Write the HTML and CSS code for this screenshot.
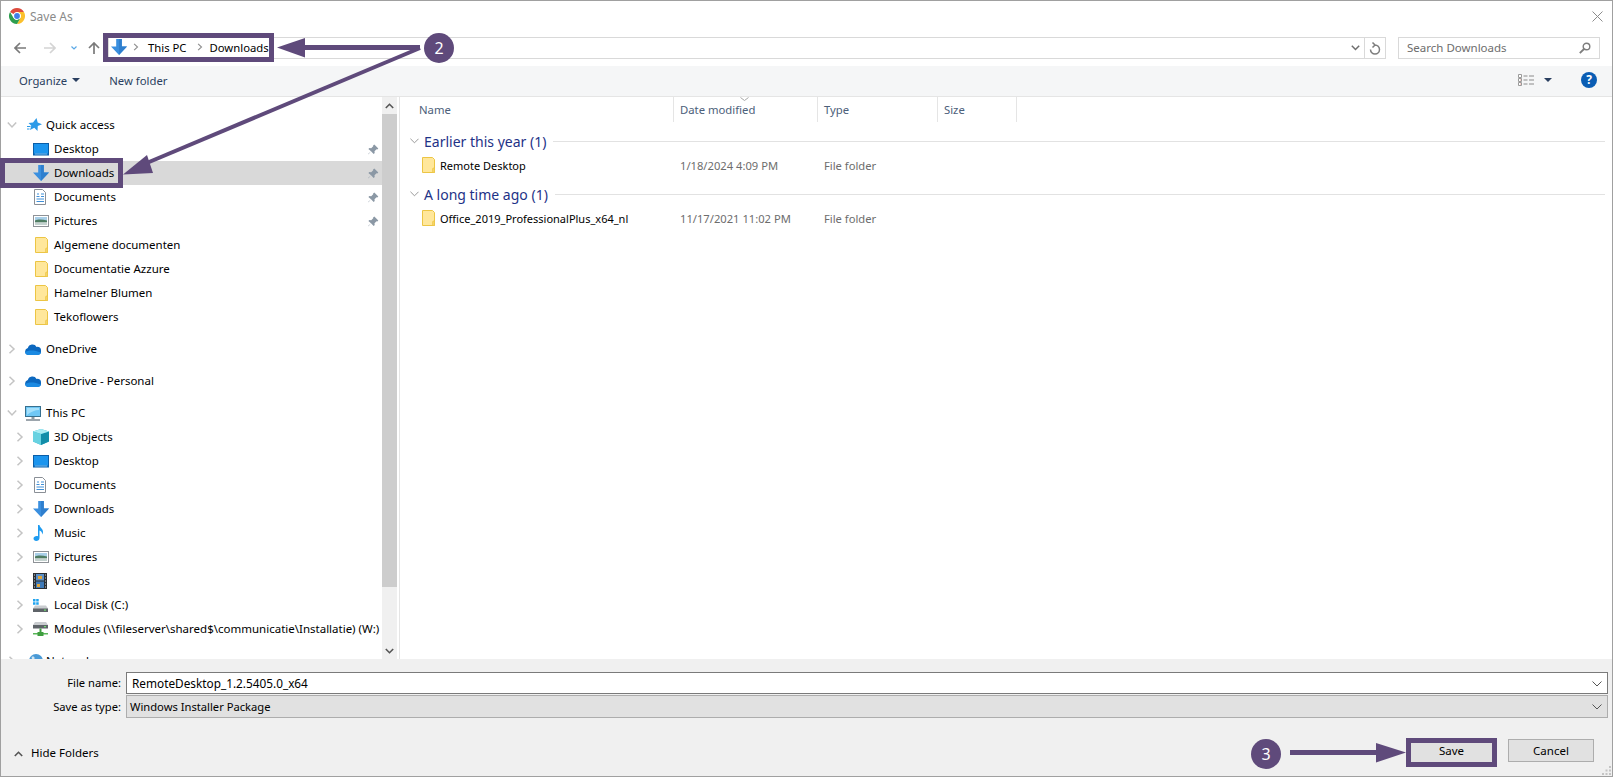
FILE: index.html
```html
<!DOCTYPE html>
<html lang="en">
<head>
<meta charset="utf-8">
<title>Save As</title>
<link rel="stylesheet" href="styles.css">
</head>
<body>
<svg class="defs" width="0" height="0" aria-hidden="true">
  <symbol id="i-folder" viewBox="0 0 13 16"><path d="M.5.5h10l2 2v13H.5z" fill="#ffe79b" stroke="#ecc544"/><path d="M11 11h1.5v4.5H10.500V12z" fill="#f6d565" stroke="#ecc544" stroke-width=".6"/></symbol>
  <symbol id="i-down" viewBox="0 0 16 16"><path d="M5.2 0h5.6v7.6H16L8 16 0 7.6h5.200z" fill="#3a8fdf"/><path d="M8 0h2.800v7.600H16L8 16z" fill="#2f7fce"/></symbol>
  <symbol id="i-desktop" viewBox="0 0 16 13"><rect x=".5" y=".5" width="15" height="11.500" fill="#1c95ee" stroke="#0a5ea8"/><path d="M1 10.500h14v1.500H1z" fill="#0c6fc2"/><path d="M2 11h12" stroke="#bfe3fb" stroke-width=".6"/></symbol>
  <symbol id="i-docs" viewBox="0 0 14 16"><path d="M1.500.5h8l3 3v12h-11z" fill="#fff" stroke="#8a8f96"/><path d="M4 5h2M3.500 7.500h3M8 5h3M8 7.500h3M3.500 10h7.500M3.500 12.500h7.500" stroke="#3f8fd8" stroke-width="1"/></symbol>
  <symbol id="i-pics" viewBox="0 0 16 12"><rect x=".5" y=".5" width="15" height="11" fill="#fff" stroke="#8e9297"/><rect x="2" y="2" width="12" height="4" fill="#a9cfe8"/><path d="M2 5.500c3-1.500 8-1 12 0v2H2z" fill="#4f7d62"/><rect x="2" y="7.500" width="12" height="2.500" fill="#c4d2cf"/></symbol>
  <symbol id="i-star" viewBox="0 0 15 14"><path d="M9.500 0l1.200 4.600L15 6.200l-4.200 1.700L10.500 13 7.300 9.700 3 12l1.300-4.300L1.500 5l4.500-.5z" fill="#2d9be8"/><path d="M0 8.500h3.500M0 11h2.500" stroke="#2d9be8"/></symbol>
  <symbol id="i-cloud" viewBox="0 0 16 11"><path d="M3.500 11A3.500 3.500 0 0 1 2.800 4.100 4.800 4.800 0 0 1 11.600 2.900 3.900 3.900 0 0 1 12.600 11z" fill="#0c68bf"/><path d="M3.500 11c-2 0-3.500-1.200-3.500-2.800 3-2.200 9-2.500 16 .4-.3 1.300-1.700 2.400-3.400 2.400z" fill="#1b8ae2"/></symbol>
  <symbol id="i-pc" viewBox="0 0 16 15"><rect x=".5" y=".5" width="15" height="10" fill="#6fc7f5" stroke="#37708f"/><path d="M2 2h12v2C10 4 5 6 2 9z" fill="#a5e0fb"/><path d="M6.500 11h3v2h-3z" fill="#8b99a3"/><path d="M1 14h14" stroke="#7b8790" stroke-width="1.500"/></symbol>
  <symbol id="i-cube" viewBox="0 0 16 16"><path d="M8 0l8 2.500v10L8 16l-8-3.500v-10z" fill="#2fb6cf"/><path d="M8 5l8-2.500v10L8 16z" fill="#128ea9"/><path d="M8 0l8 2.500L8 5 0 2.500z" fill="#a9ecf3"/><path d="M0 2.500L8 5v11l-8-3.500z" fill="#68d2e1"/></symbol>
  <symbol id="i-music" viewBox="0 0 12 16"><path d="M5 0h1.500c.3 2.500 3.500 3.500 3.500 7 0 1-.3 1.800-.8 2.600.2-2.600-1.400-3.800-2.700-4.200V13c0 1.800-1.500 3-3.300 3C1.700 16 .5 15 .5 13.600c0-1.500 1.500-2.600 3.200-2.600.5 0 .9.100 1.300.2z" fill="#1e9bf0"/></symbol>
  <symbol id="i-video" viewBox="0 0 14 16"><rect width="14" height="16" fill="#2b2f33"/><path d="M3 1h8v6.500H3z" fill="#5a90c9"/><path d="M3 8.500h8V15H3z" fill="#3f7ab8"/><path d="M5 3h4v3H5zM4 11h3v3H4z" fill="#e0a53a"/><path d="M1 2h1M1 5h1M1 8h1M1 11h1M1 14h1M12 2h1M12 5h1M12 8h1M12 11h1M12 14h1" stroke="#cfd3d6"/></symbol>
  <symbol id="i-disk" viewBox="0 0 15 13"><path d="M0 0h2.500v2.500H0zM3.200 0h2.500v2.500H3.200zM0 3.200h2.500v2.500H0zM3.200 3.200h2.500v2.500H3.200z" fill="#1fa3ee"/><path d="M2 6.500h11l2 3v3.500H0V9.500z" fill="#c9cccf"/><rect y="9.500" width="15" height="3.500" fill="#5e6368"/><rect x="11" y="10.500" width="2" height="1.200" fill="#6ee06e"/></symbol>
  <symbol id="i-net" viewBox="0 0 15 15"><path d="M2 0h11l2 3v3H0V3z" fill="#c9cccf"/><rect y="3" width="15" height="3.500" fill="#5e6368"/><rect x="11" y="4" width="2" height="1.200" fill="#6ee06e"/><path d="M6.500 6.500h2V11h-2z" fill="#3f9e3f"/><path d="M0 11h15v1.500H0z" fill="#58b558"/><path d="M4.500 10h6v4h-6z" fill="#3f9e3f"/></symbol>
  <symbol id="i-globe" viewBox="0 0 16 16"><circle cx="8" cy="8" r="8" fill="#4a9ad6"/><path d="M3 3c3-1 4 1 3 3S3 7 3 3zM9 8c3-1 5 0 4 3s-3 3-4 1z" fill="#cfe5f2"/></symbol>
  <symbol id="i-pin" viewBox="0 0 11 11"><path d="M6.300.6l4 4-1 .8-.8-.2-2 2 .2 1.800-1 1L3 7.300l-2.500 3-.4-.4 2.900-2.600L.4 5.100l1-1 1.800.2 2-2-.1-.9z" fill="#8b98a5"/></symbol>
  <symbol id="c-right" viewBox="0 0 8 10"><path d="M1.500.8L6 5 1.500 9.200" fill="none" stroke="currentColor" stroke-width="1.500"/></symbol>
  <symbol id="c-down" viewBox="0 0 10 8"><path d="M.8 1.500L5 6l4.200-4.500" fill="none" stroke="currentColor" stroke-width="1.500"/></symbol>
</svg>

<div class="win">
  <header class="titlebar">
    <svg class="chrome" viewBox="0 0 16 16" aria-hidden="true">
      <path d="M8 0a8 8 0 0 1 6.930 4H8a4 4 0 0 0-3.460 2L1.070 4A8 8 0 0 1 8 0z" fill="#dd4b3e"/>
      <path d="M14.930 4A8 8 0 0 1 8 16l3.460-6A4 4 0 0 0 8 4z" fill="#fbc02d"/>
      <path d="M1.070 4l3.470 6A4 4 0 0 0 8 12l3.460-2L8 16A8 8 0 0 1 1.070 4z" fill="#2e9e4f"/>
      <circle cx="8" cy="8" r="3.600" fill="#fff"/><circle cx="8" cy="8" r="2.900" fill="#3f7fe8"/>
    </svg>
    <span class="title">Save As</span>
    <svg class="close" viewBox="0 0 11 11" aria-hidden="true"><path d="M.5.500l10 10M10.500.500l-10 10" stroke="#8c8c8c"/></svg>
  </header>

  <nav class="navbar">
    <svg class="nav-a back" viewBox="0 0 12 12" aria-hidden="true"><path d="M12 6H1.500M6 1L1 6l5 5" fill="none" stroke="#7a7a7a" stroke-width="1.700"/></svg>
    <svg class="nav-a fwd" viewBox="0 0 12 12" aria-hidden="true"><path d="M0 6h10.500M6 1l5 5-5 5" fill="none" stroke="#d4d4d4" stroke-width="1.700"/></svg>
    <svg class="nav-c" viewBox="0 0 6 4" aria-hidden="true"><path d="M.5.500L3 3 5.500.500" fill="none" stroke="#5aa8e6" stroke-width="1.200"/></svg>
    <svg class="nav-a up" viewBox="0 0 12 12" aria-hidden="true"><path d="M6 12V1.500M1 6l5-5 5 5" fill="none" stroke="#7a7a7a" stroke-width="1.700"/></svg>
    <div class="address">
      <svg class="crumb-icon"><use href="#i-down"/></svg>
      <svg class="crumb-sep first"><use href="#c-right"/></svg>
      <span class="crumb">This PC</span>
      <svg class="crumb-sep"><use href="#c-right"/></svg>
      <span class="crumb">Downloads</span>
      <svg class="addr-drop" viewBox="0 0 9 6" aria-hidden="true"><path d="M.8.800L4.500 4.500 8.200.800" fill="none" stroke="#6d6d6d" stroke-width="1.500"/></svg>
      <div class="refresh">
        <svg viewBox="0 0 12 13" aria-hidden="true"><path d="M6 3a4.500 4.500 0 1 1-4.500 4.500M3.500.5L6 3 3.500 5.500" fill="none" stroke="#7d7d7d" stroke-width="1.500"/></svg>
      </div>
    </div>
    <div class="search">
      <span class="search-text">Search Downloads</span>
      <svg viewBox="0 0 12 12" aria-hidden="true"><circle cx="7.500" cy="4.500" r="3.300" fill="none" stroke="#7d7d7d" stroke-width="1.400"/><path d="M5 7L.8 11.200" stroke="#7d7d7d" stroke-width="1.800"/></svg>
    </div>
  </nav>

  <div class="toolbar">
    <span class="tool">Organize</span><span class="caret"></span>
    <span class="tool new">New folder</span>
    <span class="spacer"></span>
    <svg class="views" viewBox="0 0 17 12" aria-hidden="true"><path d="M.5.500h3v3h-3zM.5 4.500h3v3h-3zM.5 8.500h3v3h-3z" fill="#fff" stroke="#9a9a9a"/><path d="M2 6h.500M2 10h.500" stroke="#d04a3a"/><path d="M5.500 2h4M11 2h5M5.500 6h4M11 6h5M5.500 10h4M11 10h5" stroke="#8a8a8a"/></svg>
    <span class="caret views-caret"></span>
    <span class="help">?</span>
  </div>

  <main class="main">
    <aside class="tree">
      <div class="tree-list">
        <div class="row top"><svg class="exp"><use href="#c-down"/></svg><svg class="ic star-ic" style="--w:15px;--h:14px"><use href="#i-star"/></svg><span>Quick access</span></div>
        <div class="row sub"><svg class="ic" style="--w:16px;--h:13px"><use href="#i-desktop"/></svg><span>Desktop</span><svg class="pin"><use href="#i-pin"/></svg></div>
        <div class="row sub sel"><svg class="ic" style="--w:16px;--h:16px"><use href="#i-down"/></svg><span>Downloads</span><svg class="pin"><use href="#i-pin"/></svg></div>
        <div class="row sub"><svg class="ic" style="--w:14px;--h:16px"><use href="#i-docs"/></svg><span>Documents</span><svg class="pin"><use href="#i-pin"/></svg></div>
        <div class="row sub"><svg class="ic" style="--w:16px;--h:12px"><use href="#i-pics"/></svg><span>Pictures</span><svg class="pin"><use href="#i-pin"/></svg></div>
        <div class="row sub"><svg class="ic fold-ic" style="--w:13px;--h:16px"><use href="#i-folder"/></svg><span>Algemene documenten</span></div>
        <div class="row sub"><svg class="ic fold-ic" style="--w:13px;--h:16px"><use href="#i-folder"/></svg><span>Documentatie Azzure</span></div>
        <div class="row sub"><svg class="ic fold-ic" style="--w:13px;--h:16px"><use href="#i-folder"/></svg><span>Hamelner Blumen</span></div>
        <div class="row sub"><svg class="ic fold-ic" style="--w:13px;--h:16px"><use href="#i-folder"/></svg><span>Tekoflowers</span></div>

        <div class="row top gap"><svg class="exp"><use href="#c-right"/></svg><svg class="ic" style="--w:16px;--h:11px"><use href="#i-cloud"/></svg><span>OneDrive</span></div>
        <div class="row top gap"><svg class="exp"><use href="#c-right"/></svg><svg class="ic" style="--w:16px;--h:11px"><use href="#i-cloud"/></svg><span>OneDrive - Personal</span></div>

        <div class="row top gap"><svg class="exp"><use href="#c-down"/></svg><svg class="ic" style="--w:16px;--h:15px"><use href="#i-pc"/></svg><span>This PC</span></div>
        <div class="row child"><svg class="exp"><use href="#c-right"/></svg><svg class="ic" style="--w:16px;--h:16px"><use href="#i-cube"/></svg><span>3D Objects</span></div>
        <div class="row child"><svg class="exp"><use href="#c-right"/></svg><svg class="ic" style="--w:16px;--h:13px"><use href="#i-desktop"/></svg><span>Desktop</span></div>
        <div class="row child"><svg class="exp"><use href="#c-right"/></svg><svg class="ic" style="--w:14px;--h:16px"><use href="#i-docs"/></svg><span>Documents</span></div>
        <div class="row child"><svg class="exp"><use href="#c-right"/></svg><svg class="ic" style="--w:16px;--h:16px"><use href="#i-down"/></svg><span>Downloads</span></div>
        <div class="row child"><svg class="exp"><use href="#c-right"/></svg><svg class="ic" style="--w:12px;--h:16px"><use href="#i-music"/></svg><span>Music</span></div>
        <div class="row child"><svg class="exp"><use href="#c-right"/></svg><svg class="ic" style="--w:16px;--h:12px"><use href="#i-pics"/></svg><span>Pictures</span></div>
        <div class="row child"><svg class="exp"><use href="#c-right"/></svg><svg class="ic" style="--w:14px;--h:16px"><use href="#i-video"/></svg><span>Videos</span></div>
        <div class="row child"><svg class="exp"><use href="#c-right"/></svg><svg class="ic" style="--w:15px;--h:13px"><use href="#i-disk"/></svg><span>Local Disk (C:)</span></div>
        <div class="row child"><svg class="exp"><use href="#c-right"/></svg><svg class="ic" style="--w:15px;--h:15px"><use href="#i-net"/></svg><span>Modules (\\fileserver\shared$\communicatie\Installatie) (W:)</span></div>

        <div class="row top gap"><svg class="exp"><use href="#c-right"/></svg><svg class="ic net-ic" style="--w:14px;--h:14px"><use href="#i-globe"/></svg><span>Network</span></div>
      </div>
    </aside>

    <div class="scrollbar">
      <div class="sb-btn"><svg viewBox="0 0 9 6" aria-hidden="true"><path d="M.8 5L4.500 1.300 8.200 5" fill="none" stroke="#555" stroke-width="1.600"/></svg></div>
      <div class="sb-thumb"></div>
      <div class="sb-track"></div>
      <div class="sb-btn"><svg viewBox="0 0 9 6" aria-hidden="true"><path d="M.8 1L4.500 4.700 8.200 1" fill="none" stroke="#555" stroke-width="1.600"/></svg></div>
    </div>

    <section class="files">
      <div class="cols">
        <div class="col first">Name</div>
        <div class="col sorted">Date modified<svg class="sort" viewBox="0 0 9 4" aria-hidden="true"><path d="M.5.500L4.500 3.500 8.500.500" fill="none" stroke="#a6a6a6"/></svg></div>
        <div class="col">Type</div>
        <div class="col">Size</div>
      </div>
      <div class="group-h"><svg class="gchev" viewBox="0 0 10 6" aria-hidden="true"><path d="M.5.500L5 5 9.500.500" fill="none" stroke="#8d8d8d"/></svg><span>Earlier this year (1)</span><i class="rule"></i></div>
      <div class="file"><span class="fname"><svg class="fic"><use href="#i-folder"/></svg>Remote Desktop</span><span class="meta">1/18/2024 4:09 PM</span><span class="meta">File folder</span></div>
      <div class="group-h"><svg class="gchev" viewBox="0 0 10 6" aria-hidden="true"><path d="M.5.500L5 5 9.500.500" fill="none" stroke="#8d8d8d"/></svg><span>A long time ago (1)</span><i class="rule"></i></div>
      <div class="file"><span class="fname"><svg class="fic"><use href="#i-folder"/></svg>Office_2019_ProfessionalPlus_x64_nl</span><span class="meta">11/17/2021 11:02 PM</span><span class="meta">File folder</span></div>
    </section>
  </main>

  <footer class="footer">
    <div class="form-row">
      <label class="lab">File name:</label>
      <div class="field input">RemoteDesktop_1.2.5405.0_x64<svg class="fchev" viewBox="0 0 10 6" aria-hidden="true"><path d="M.5.500L5 5 9.500.500" fill="none" stroke="#555"/></svg></div>
    </div>
    <div class="form-row">
      <label class="lab">Save as type:</label>
      <div class="field select">Windows Installer Package<svg class="fchev" viewBox="0 0 10 6" aria-hidden="true"><path d="M.5.500L5 5 9.500.500" fill="none" stroke="#555"/></svg></div>
    </div>
    <div class="actions">
      <svg class="hide-ic" viewBox="0 0 9 6" aria-hidden="true"><path d="M.8 5L4.500 1.300 8.200 5" fill="none" stroke="#555" stroke-width="1.600"/></svg>
      <span class="hide">Hide Folders</span>
      <span class="spacer"></span>
      <button class="btn save">Save</button>
      <button class="btn cancel">Cancel</button>
    </div>
    <svg class="grip" viewBox="0 0 10 10" aria-hidden="true"><path d="M8 1h2v2H8zM4.500 4.500h2v2h-2zM8 4.500h2v2H8zM1 8h2v2H1zM4.500 8h2v2h-2zM8 8h2v2H8z" fill="#c4c4c4"/></svg>
  </footer>
</div>

<svg class="marks" viewBox="0 0 1613 777" aria-hidden="true">
  <rect class="mbox" x="105.500" y="35.500" width="166" height="24"/>
  <rect class="mbox" x="2.500" y="160.500" width="118" height="25"/>
  <rect class="mbox" x="1408.500" y="740.500" width="86" height="24"/>
  <path class="mline" d="M300 47.500H420"/>
  <path class="mfill" d="M277 47.500L305 38V57.500z"/>
  <path class="mline2" d="M420 48L142 165"/>
  <path class="mfill" d="M123 174.500L147 155L153 173z"/>
  <path class="mline3" d="M1290 752.500H1380"/>
  <path class="mfill" d="M1406 752.500L1376 743V762.500z"/>
</svg>
<div class="badge b2">2</div>
<div class="badge b3">3</div>
</body>
</html>
```

FILE: styles.css
```css
* { box-sizing: border-box; }
html, body { margin: 0; padding: 0; width: 1613px; height: 777px; overflow: hidden; background: #fff; }
body { position: relative; font-family: "Noto Sans", "Open Sans", sans-serif; font-size: 11.5px; color: #000; }
.defs { position: absolute; }
.win { width: 1613px; height: 777px; border: 1px solid #a0a0a0; display: flex; flex-direction: column; background: #fff; }

.titlebar { height: 32px; flex: none; display: flex; align-items: center; padding: 0 9px 2px 8px; }
.chrome { width: 16px; height: 16px; margin-right: 5px; }
.title { color: #8a8a8a; font-size: 12px; }
.close { width: 11px; height: 11px; margin-left: auto; }

.navbar { height: 33px; flex: none; display: flex; align-items: flex-start; padding: 4px 12px 0 13px; }
.nav-a { width: 12px; height: 12px; margin-top: 5px; flex: none; }
.fwd { margin-left: 18px; }
.nav-c { width: 6px; height: 4px; margin: 9px 0 0 15px; flex: none; }
.up { margin-left: 11px; }
.address { margin-left: 8px; flex: 1; height: 22px; border: 1px solid #d9d9d9; display: flex; align-items: center; padding: 0 0 2px 2px; color: #000; font-size: 11.3px; }
.crumb-icon { width: 16px; height: 16px; flex: none; }
.crumb-sep { width: 6px; height: 8px; margin: 0 7px 0 5px; flex: none; color: #8f8f8f; }
.crumb-sep.first { margin: 0 9px 0 6px; }
.crumb { flex: none; margin-right: 5px; }
.addr-drop { width: 9px; height: 6px; margin: 2px 4px 0 auto; flex: none; }
.refresh { width: 21px; height: 20px; margin-bottom: -2px; border-left: 1px solid #d9d9d9; display: flex; align-items: center; justify-content: center; flex: none; }
.refresh svg { width: 12px; height: 13px; }
.search { width: 202px; height: 22px; margin-left: 12px; flex: none; border: 1px solid #d9d9d9; display: flex; align-items: center; justify-content: space-between; padding: 0 8px 2px; color: #6d6d6d; }
.search svg { width: 12px; height: 12px; margin-top: 2px; }

.toolbar { height: 31px; flex: none; background: #f5f6f7; border-bottom: 1px solid #e5e5e5; display: flex; align-items: center; padding: 0 15px 2px 18px; color: #2a3f60; font-size: 11.3px; }
.caret { width: 0; height: 0; border-left: 4px solid transparent; border-right: 4px solid transparent; border-top: 4px solid #2a3f60; margin-left: 5px; }
.new { margin-left: 29px; }
.spacer { flex: 1; }
.views { width: 17px; height: 12px; }
.views-caret { margin-left: 9px; }
.help { width: 16px; height: 16px; border-radius: 50%; background: #0a5db4; color: #fff; font-weight: 700; font-size: 12px; line-height: 16px; text-align: center; margin-left: 29px; }

.main { flex: 1; min-height: 0; display: flex; }
.tree { width: 381px; flex: none; overflow: hidden; padding-top: 16px; }
.row { height: 24px; display: flex; align-items: center; white-space: nowrap; position: relative; color: #000; }
.row > span { padding-bottom: 2px; }
.row.gap { margin-top: 8px; }
.row.sel { background: #d9d9d9; }
.row .ic { width: var(--w); height: var(--h); flex: none; }
.exp { width: 10px; height: 10px; flex: none; color: #c4c4c4; }
.top { padding-left: 6px; }
.top .exp { margin-right: 8px; }
.top > span { position: absolute; left: 45px; }
.sub > span, .child > span { position: absolute; left: 53px; }
.sub { padding-left: 32px; }
.child { padding-left: 14px; }
.child .exp { margin-right: 8px; }
.pin { width: 11px; height: 11px; position: absolute; right: 3px; top: 7px; }
.star-ic { margin-left: 2px; }
.fold-ic { margin-left: 2px; }
.net-ic { margin-left: 4px; }

.scrollbar { width: 15px; flex: none; display: flex; flex-direction: column; background: #f0f0f0; }
.sb-btn { height: 17px; flex: none; display: flex; align-items: center; justify-content: center; }
.sb-btn svg { width: 9px; height: 6px; }
.sb-thumb { height: 473px; flex: none; background: #cdcdcd; }
.sb-track { flex: 1; }

.files { flex: 1; margin-left: 2px; border-left: 1px solid #e5e5e5; min-width: 0; }
.cols { display: flex; height: 25px; color: #4c607a; font-size: 11.3px; }
.col { width: 120px; padding-left: 6px; border-right: 1px solid #e5e5e5; line-height: 26px; position: relative; }
.col.first { width: 274px; padding-left: 19px; }
.col.sorted { width: 144px; }
.col:last-child { width: 79px; }
.sort { width: 9px; height: 4px; position: absolute; left: 66px; top: 0; }
.group-h { height: 24px; margin-top: 7px; display: flex; align-items: center; color: #1e3287; font-size: 14px; padding: 0 7px 0 10px; }
.file + .group-h { margin-top: 4px; }
.gchev { width: 9px; height: 6px; margin-right: 5px; flex: none; }
.rule { flex: 1; height: 1px; background: #e2e2e2; margin-left: 7px; }
.file { height: 25px; display: grid; grid-template-columns: 274px 144px 120px; align-items: center; padding-bottom: 1px; }
.fname { display: flex; align-items: center; padding-left: 22px; color: #000; white-space: nowrap; font-size: 11px; }
.fic { width: 13px; height: 16px; margin-right: 5px; flex: none; }
.meta { padding-left: 6px; color: #6d6d6d; font-size: 11.2px; }

.footer { height: 117px; flex: none; background: #f0f0f0; position: relative; padding-top: 12px; display: flex; flex-direction: column; }
.form-row { display: flex; align-items: center; height: 23px; margin-bottom: 1px; }
.lab { width: 120px; text-align: right; flex: none; font-size: 11.2px; }
.field { flex: none; width: 1482px; margin-left: 5px; display: flex; align-items: center; position: relative; }
.input { height: 22px; background: #fff; border: 1px solid #7a7a7a; padding-left: 5px; font-size: 11.8px; }
.select { height: 23px; background: #e1e1e1; border: 1px solid #adadad; padding-left: 3px; font-size: 11.2px; }
.fchev { width: 10px; height: 6px; position: absolute; right: 5px; top: 8px; }
.actions { display: flex; align-items: flex-start; margin-top: auto; padding: 0 18px 0 13px; height: 37px; }
.hide-ic { width: 9px; height: 6px; margin: 12px 8px 0 0; flex: none; }
.hide { margin-top: 6px; }
.btn { font: inherit; color: #000; height: 23px; width: 86px; background: #e1e1e1; border: 1px solid #adadad; padding: 0; }
.save { width: 81px; border: 0; }
.cancel { margin-left: 16px; }
.grip { width: 10px; height: 10px; position: absolute; right: 1px; bottom: 1px; }

.marks { position: absolute; left: 0; top: 0; width: 1613px; height: 777px; pointer-events: none; }
.mbox { fill: none; stroke: #5f4a7b; stroke-width: 5; }
.mline { fill: none; stroke: #5f4a7b; stroke-width: 5; }
.mline2 { fill: none; stroke: #5f4a7b; stroke-width: 4; }
.mline3 { fill: none; stroke: #5f4a7b; stroke-width: 5; }
.mfill { fill: #5f4a7b; }
.badge { position: absolute; width: 30px; height: 30px; border-radius: 50%; background: #5f4a7b; color: #fff; font-size: 16px; line-height: 30px; text-align: center; }
.b2 { left: 424px; top: 33px; }
.b3 { left: 1251px; top: 739px; }
```
